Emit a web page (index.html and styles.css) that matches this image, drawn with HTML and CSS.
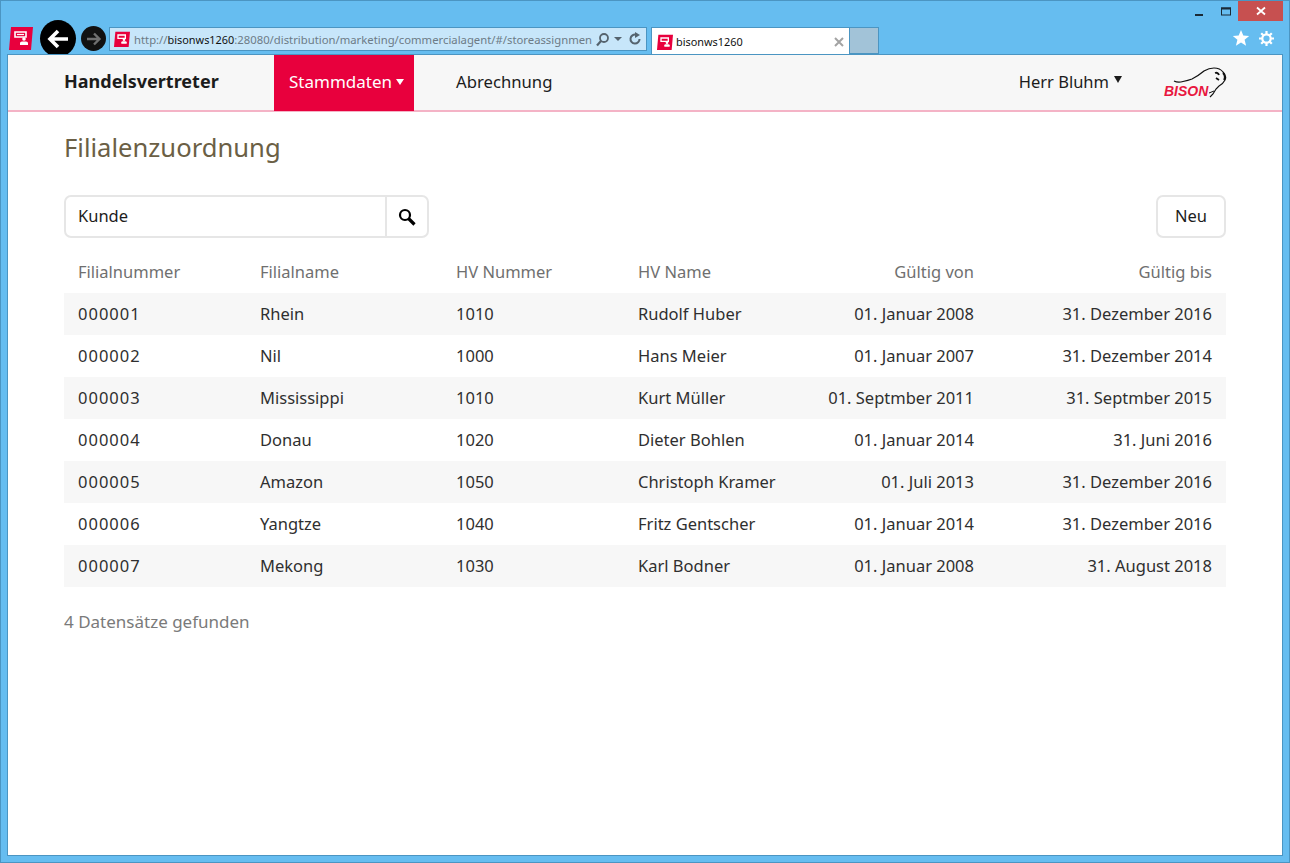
FILE: index.html
```html
<!DOCTYPE html>
<html lang="de">
<head>
<meta charset="utf-8">
<title>Filialenzuordnung</title>
<link rel="stylesheet" href="styles.css">
</head>
<body>
<div class="window">
  <div class="titlebar">
    <button class="win-btn"><svg width="10" height="10" viewBox="0 0 10 10"><rect x="1" y="7" width="8" height="2" fill="#1a2a36"/></svg></button>
    <button class="win-btn"><svg width="12" height="10" viewBox="0 0 12 10"><rect x="1.5" y="1" width="9" height="7" fill="none" stroke="#1a2a36"/><rect x="1" y="0.5" width="10" height="2" fill="#1a2a36"/></svg></button>
    <button class="win-close"><svg width="10" height="10" viewBox="0 0 10 10"><path d="M1 1.5 9 8.5M9 1.5 1 8.5" stroke="#fff" stroke-width="1.8"/></svg></button>
  </div>
  <div class="toolbar">
    <svg class="app-icon" width="24" height="24" viewBox="0 0 24 24"><path d="M2 1H24L22 24H0Z" fill="#e8003d"/><path d="M6 6H17V11H6Z" fill="none" stroke="#fff" stroke-width="1.6"/><path d="M8 8.5H15" stroke="#fff" stroke-width="1.2"/><circle cx="15" cy="13" r="1.8" fill="#fff"/><path d="M11 19V17Q11 15.5 13 15.5H17Q19 15.5 19 17V19Z" fill="#fff"/></svg>
    <button class="back"><svg width="24" height="24" viewBox="0 0 24 24"><path d="M22 12H5M12 4 4 12 12 20" fill="none" stroke="#fff" stroke-width="3.6"/></svg></button>
    <button class="forward"><svg width="16" height="16" viewBox="0 0 16 16"><path d="M1 8H13M8 2.5 13.5 8 8 13.5" fill="none" stroke="#6f6f6f" stroke-width="2.4"/></svg></button>
    <div class="address">
      <svg class="fav" width="16" height="16" viewBox="0 0 24 24"><path d="M2 1H24L22 24H0Z" fill="#e8003d"/><path d="M6 6H17V11H6Z" fill="none" stroke="#fff" stroke-width="2"/><circle cx="15" cy="13" r="2" fill="#fff"/><path d="M11 19V17Q11 15.5 13 15.5H17Q19 15.5 19 17V19Z" fill="#fff"/></svg>
      <span class="url">http://<b>bisonws1260</b>:28080/distribution/marketing/commercialagent/#/storeassignmen</span>
      <svg class="addr-search" width="15" height="15" viewBox="0 0 15 15"><circle cx="9" cy="6" r="4" fill="none" stroke="#55636e" stroke-width="1.8"/><path d="M6 9 2 13.5" stroke="#55636e" stroke-width="2.2"/></svg>
      <span class="addr-caret"></span>
      <svg class="addr-reload" width="14" height="14" viewBox="0 0 14 14"><path d="M11.5 7A4.5 4.5 0 1 1 8 2.7" fill="none" stroke="#55636e" stroke-width="2"/><path d="M7 0V6L12 3Z" fill="#55636e"/></svg>
    </div>
    <div class="tab">
      <svg width="16" height="16" viewBox="0 0 24 24"><path d="M2 1H24L22 24H0Z" fill="#e8003d"/><path d="M6 6H17V11H6Z" fill="none" stroke="#fff" stroke-width="2"/><circle cx="15" cy="13" r="2" fill="#fff"/><path d="M11 19V17Q11 15.5 13 15.5H17Q19 15.5 19 17V19Z" fill="#fff"/></svg>
      <span class="tab-title">bisonws1260</span>
      <svg class="tab-x" width="10" height="10" viewBox="0 0 10 10"><path d="M1 1 9 9M9 1 1 9" stroke="#a3a3a3" stroke-width="2"/></svg>
    </div>
    <div class="newtab"></div>
    <div class="tools">
      <svg width="18" height="18" viewBox="0 0 18 18"><path d="M9 1 11.3 6.6 17.2 7 12.6 10.8 14.1 16.7 9 13.5 3.9 16.7 5.4 10.8 .8 7 6.7 6.6Z" fill="#fff"/></svg>
      <svg width="17" height="17" viewBox="0 0 17 17"><circle cx="8.5" cy="8.5" r="4.2" fill="none" stroke="#fff" stroke-width="2.2"/><path d="M8.5 1V4M8.5 13V16M1 8.5H4M13 8.5H16M3.2 3.2 5.3 5.3M11.7 11.7 13.8 13.8M13.8 3.2 11.7 5.3M5.3 11.7 3.2 13.8" stroke="#fff" stroke-width="2.2"/></svg>
    </div>
  </div>
  <div class="page">
    <nav class="nav">
      <div class="brand">Handelsvertreter</div>
      <a class="nav-item active">Stammdaten <span class="caret"></span></a>
      <a class="nav-item">Abrechnung</a>
      <div class="user">Herr Bluhm <span class="caret dark"></span></div>
      <div class="logo">
        <svg width="64" height="34" viewBox="0 0 64 34"><path d="M11 16Q15 18 20 16.500Q25 15.500 29 14Q35 11 41 6Q46 3 51 3Q57 3 60 7Q64 11 62 15Q60 19 56 21L53 24 50 29 47 32" fill="none" stroke="#111" stroke-width="1.200"/><path d="M52 8Q55 7 56 10M53 13 56 15M60 8Q63 11 61 15" fill="none" stroke="#111" stroke-width="1.800"/><path d="M46 28 51 26" stroke="#111"/></svg>
        <span class="logo-text">BISON</span>
      </div>
    </nav>
    <main class="content">
      <h1 class="title">Filialenzuordnung</h1>
      <div class="controls">
        <div class="search">
          <span class="search-text">Kunde</span>
          <button class="search-btn"><svg width="18" height="18" viewBox="0 0 18 18"><circle cx="7" cy="7" r="5" fill="none" stroke="#000" stroke-width="2.2"/><path d="M10.500 10.500 16.500 16.500" stroke="#000" stroke-width="3.200"/></svg></button>
        </div>
        <button class="neu">Neu</button>
      </div>
      <table class="grid">
        <thead>
          <tr><th>Filialnummer</th><th>Filialname</th><th>HV Nummer</th><th>HV Name</th><th class="r">Gültig von</th><th class="r">Gültig bis</th></tr>
        </thead>
        <tbody>
          <tr><td class="id">000001</td><td>Rhein</td><td>1010</td><td>Rudolf Huber</td><td class="r">01. Januar 2008</td><td class="r">31. Dezember 2016</td></tr>
          <tr><td class="id">000002</td><td>Nil</td><td>1000</td><td>Hans Meier</td><td class="r">01. Januar 2007</td><td class="r">31. Dezember 2014</td></tr>
          <tr><td class="id">000003</td><td>Mississippi</td><td>1010</td><td>Kurt Müller</td><td class="r">01. Septmber 2011</td><td class="r">31. Septmber 2015</td></tr>
          <tr><td class="id">000004</td><td>Donau</td><td>1020</td><td>Dieter Bohlen</td><td class="r">01. Januar 2014</td><td class="r">31. Juni 2016</td></tr>
          <tr><td class="id">000005</td><td>Amazon</td><td>1050</td><td>Christoph Kramer</td><td class="r">01. Juli 2013</td><td class="r">31. Dezember 2016</td></tr>
          <tr><td class="id">000006</td><td>Yangtze</td><td>1040</td><td>Fritz Gentscher</td><td class="r">01. Januar 2014</td><td class="r">31. Dezember 2016</td></tr>
          <tr><td class="id">000007</td><td>Mekong</td><td>1030</td><td>Karl Bodner</td><td class="r">01. Januar 2008</td><td class="r">31. August 2018</td></tr>
        </tbody>
      </table>
      <p class="count">4 Datensätze gefunden</p>
    </main>
  </div>
</div>
</body>
</html>
```
FILE: styles.css
```css
* { box-sizing: border-box; }
html, body { margin: 0; height: 100%; }
body { font-family: "Noto Sans", sans-serif; overflow: hidden; }
button { font-family: inherit; padding: 0; }
svg { display: block; flex: none; }

.window { width: 1290px; height: 863px; background: #66bdf0; border: 1px solid #4b95c2; display: flex; flex-direction: column; padding: 0 6px 6px; }

.titlebar { height: 20px; display: flex; justify-content: flex-end; align-items: flex-start; flex: none; }
.win-btn { width: 27px; height: 20px; border: 0; background: transparent; display: flex; align-items: center; justify-content: center; margin-top: 1px; }
.win-close { width: 45px; height: 20px; border: 0; background: #c75050; display: flex; align-items: center; justify-content: center; margin-left: -1px; }

.toolbar { height: 33px; flex: none; display: flex; align-items: flex-start; margin-left: 2px; }
.app-icon { margin: 5px 7px 0 0; }
.back { width: 36px; height: 37px; margin-top: -1px; border-radius: 50%; background: #000; border: 0; display: flex; align-items: center; justify-content: center; }
.forward { width: 25px; height: 25px; margin: 5px 3px 0 5px; border-radius: 50%; background: #111; border: 0; display: flex; align-items: center; justify-content: center; }
.address { width: 538px; height: 24px; margin-top: 6px; background: #c7e6fa; border: 1px solid #4b95c2; display: flex; align-items: center; padding: 0 4px 0 4px; }
.fav { margin-right: 4px; }
.url { font-size: 11.300px; color: #6d7b86; white-space: nowrap; flex: none; }
.url b { font-weight: 400; font-size: 10.900px; color: #111; }
.addr-search { margin-left: auto; }
.addr-caret { width: 0; height: 0; margin: 0 6px 0 4px; border: 4px solid transparent; border-top-color: #55636e; border-bottom: 0; }
.tab { width: 199px; height: 28px; margin: 6px 0 0 4px; background: #fff; border: 1px solid #4b95c2; border-bottom: 0; display: flex; align-items: center; padding: 0 5px 0 5px; }
.tab-title { font-size: 10.900px; color: #111; margin-left: 3px; flex: 1; }
.newtab { width: 29px; height: 27px; margin-top: 6px; background: #a2c3d8; border: 1px solid #4b95c2; border-left: 0; }
.tools { margin-left: auto; display: flex; gap: 8px; align-items: center; margin-top: 8px; margin-right: 8px; }

.page { flex: 1; background: #fff; border: 1px solid #4b95c2; min-height: 0; position: relative; }

.nav { height: 57px; background: #f7f7f7; border-bottom: 2px solid #f4b3c6; display: flex; align-items: stretch; padding: 0 56px; color: #1c1c1c; font-size: 17px; }
.brand { width: 210px; font-weight: 700; font-size: 18px; align-self: center; margin-bottom: 3px; }
.nav-item { display: flex; align-items: center; padding-bottom: 2px; font-size: 16.700px; }
.nav-item.active { width: 140px; height: 56px; background: #e8003d; color: #fff; padding: 0 0 3px 15px; gap: 4px; margin-right: 42px; font-size: 17px; }
.caret { width: 0; height: 0; border: 4px solid transparent; border-top: 6px solid #fff; border-bottom: 0; display: inline-block; }
.caret.dark { border-top: 7px solid #1c1c1c; border-left-width: 4.500px; border-right-width: 4.500px; margin-bottom: 4px; }
.user { margin-left: auto; align-self: center; margin-bottom: 2px; display: flex; align-items: center; gap: 5px; margin-right: 41px; font-size: 16.500px; }
.logo { width: 64px; height: 34px; align-self: center; margin: 0 -1px 2px 0; position: relative; }
.logo-text { position: absolute; left: 1px; bottom: 0; color: #e8173f; font: italic 700 14px "Liberation Sans", sans-serif; line-height: 16px; }

.content { padding: 0 56px; }
.title { margin: 16px 0 27px; font-size: 25.600px; line-height: 40px; font-weight: 400; color: #6b5f45; }
.controls { display: flex; justify-content: space-between; height: 43px; }
.search { width: 365px; border: 2px solid #e6e6e6; border-radius: 7px; display: flex; align-items: center; background: #fff; padding-bottom: 2px; }
.search-text { flex: 1; padding-left: 12px; font-size: 16.500px; color: #1c1c1c; }
.search-btn { width: 42px; height: calc(100% + 2px); margin-bottom: -2px; border: 0; border-left: 2px solid #e6e6e6; background: transparent; display: flex; align-items: center; justify-content: center; }
.neu { width: 70px; border: 2px solid #e6e6e6; border-radius: 7px; background: #fff; font-size: 16.500px; color: #1c1c1c; padding-bottom: 2px; }

.grid { width: 1162px; margin-top: 13px; border-collapse: collapse; table-layout: fixed; font-size: 16.500px; }
.grid th:nth-child(1) { width: 182px; }
.grid th:nth-child(2) { width: 196px; }
.grid th:nth-child(3), .grid th:nth-child(4), .grid th:nth-child(5) { width: 182px; }
.grid th { height: 42px; padding: 0 14px 2px; text-align: left; font-weight: 400; color: #6f6f6f; }
.grid td { height: 42px; padding: 0 14px 2px; color: #2f2f2f; white-space: nowrap; }
.grid td.id { letter-spacing: 1px; }
.grid .r { text-align: right; }
.grid tbody tr:nth-child(odd) { background: #f7f7f7; }
.count { margin: 23px 0 0; font-size: 17px; line-height: 24px; color: #7a7a7a; }
```
